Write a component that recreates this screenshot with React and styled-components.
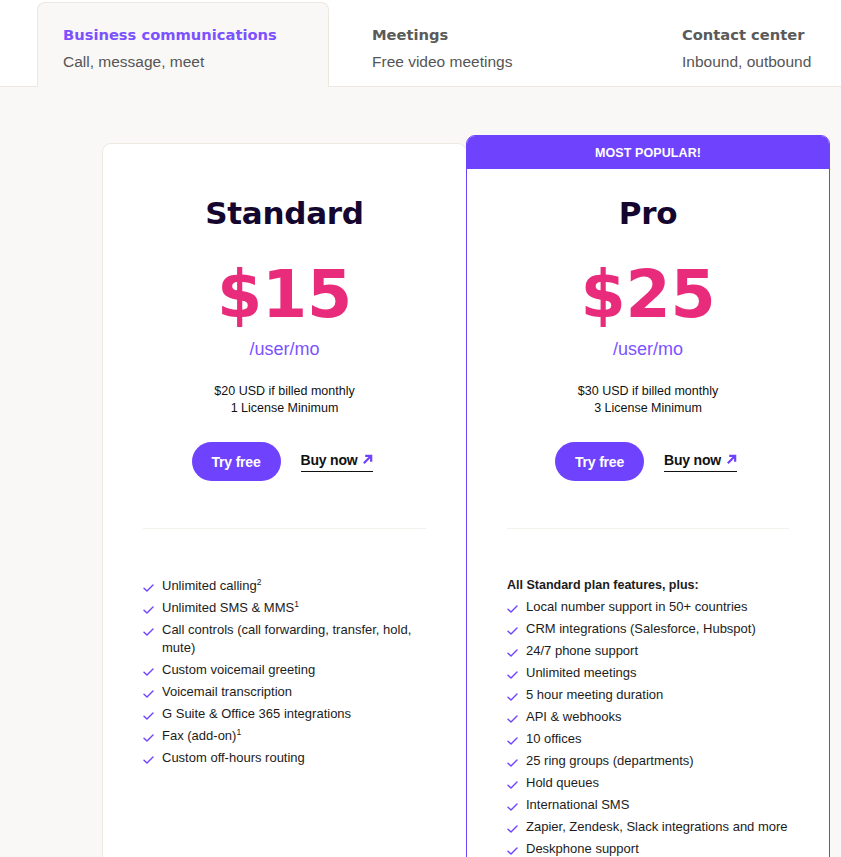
import React from "react";
import styled, { createGlobalStyle } from "styled-components";

const GlobalStyle = createGlobalStyle`
	html, body {
		margin: 0;
		padding: 0;
		background: #f9f8f6;
		font-family: "Liberation Sans", Arial, sans-serif;
		color: #1c1c1c;
	}
	* {
		box-sizing: border-box;
	}
`;

const tabs = [
	{ title: "Business communications", sub: "Call, message, meet", width: 292, active: true },
	{ title: "Meetings", sub: "Free video meetings", width: 310 },
	{ title: "Contact center", sub: "Inbound, outbound", width: 200 },
];

const plans = [
	{
		name: "Standard",
		price: "$15",
		monthly: "$20 USD if billed monthly",
		minimum: "1 License Minimum",
		features: [
			["Unlimited calling", "2"],
			["Unlimited SMS & MMS", "1"],
			["Call controls (call forwarding, transfer, hold, mute)"],
			["Custom voicemail greeting"],
			["Voicemail transcription"],
			["G Suite & Office 365 integrations"],
			["Fax (add-on)", "1"],
			["Custom off-hours routing"],
		],
	},
	{
		name: "Pro",
		price: "$25",
		monthly: "$30 USD if billed monthly",
		minimum: "3 License Minimum",
		popular: true,
		lead: "All Standard plan features, plus:",
		features: [
			["Local number support in 50+ countries"],
			["CRM integrations (Salesforce, Hubspot)"],
			["24/7 phone support"],
			["Unlimited meetings"],
			["5 hour meeting duration"],
			["API & webhooks"],
			["10 offices"],
			["25 ring groups (departments)"],
			["Hold queues"],
			["International SMS"],
			["Zapier, Zendesk, Slack integrations and more"],
			["Deskphone support"],
		],
	},
];

function Check() {
	return (
		<CheckIcon viewBox="0 0 11 8" width="11" height="8">
			<path d="M1 4.2 L4 7 L10 1" fill="none" stroke="#6f42fe" strokeWidth="1.4" strokeLinecap="round" strokeLinejoin="round" />
		</CheckIcon>
	);
}

function Arrow() {
	return (
		<svg viewBox="0 0 12 12" width="11" height="11">
			<path d="M2 10 L10 2 M3.5 2 H10 V8.5" fill="none" stroke="#6f42fe" strokeWidth="2.4" />
		</svg>
	);
}

function App() {
	return (
		<>
			<GlobalStyle />
			<TabBar>
				{tabs.map((t) => (
					<Tab key={t.title} $active={t.active} $width={t.width}>
						<TabTitle $active={t.active}>{t.title}</TabTitle>
						<TabSub>{t.sub}</TabSub>
					</Tab>
				))}
			</TabBar>
			<Main>
				<Cards>
					{plans.map((p) => (
						<Card key={p.name} $popular={p.popular}>
							{p.popular && <Banner>MOST POPULAR!</Banner>}
							<CardBody $popular={p.popular}>
								<PlanName>{p.name}</PlanName>
								<Price>{p.price}</Price>
								<Per>/user/mo</Per>
								<Billing>
									{p.monthly}
									<br />
									{p.minimum}
								</Billing>
								<Actions>
									<TryFree>Try free</TryFree>
									<BuyNow>
										Buy now <Arrow />
									</BuyNow>
								</Actions>
								<Divider />
								<Features $lead={!!p.lead}>
									{p.lead && <Lead>{p.lead}</Lead>}
									{p.features.map(([text, sup]) => (
										<Feature key={text}>
											<Check />
											<span>
												{text}
												{sup && <sup>{sup}</sup>}
											</span>
										</Feature>
									))}
								</Features>
							</CardBody>
						</Card>
					))}
				</Cards>
			</Main>
		</>
	);
}

export default App;

const TabBar = styled.div`
	display: flex;
	height: 87px;
	padding: 2px 0 0 37px;
	background: #ffffff;
	border-bottom: 1px solid #ece8df;
`;

const Tab = styled.div`
	width: ${(p) => p.$width}px;
	flex-shrink: 0;
	padding: 22px 0 0 ${(p) => (p.$active ? 25 : 42)}px;
	margin-bottom: -1px;
	border: 1px solid ${(p) => (p.$active ? "#ece8df" : "transparent")};
	border-bottom: none;
	border-radius: 8px 8px 0 0;
	background: ${(p) => (p.$active ? "#f9f8f6" : "transparent")};
`;

const TabTitle = styled.div`
	font-family: "DejaVu Sans", sans-serif;
	font-weight: bold;
	font-size: 14.7px;
	line-height: 20px;
	color: ${(p) => (p.$active ? "#7c52ff" : "#5a5a5a")};
`;

const TabSub = styled.div`
	margin-top: 7px;
	font-size: 15.5px;
	line-height: 20px;
	color: #555555;
`;

const Main = styled.div`
	background: #f9f8f6;
	padding: 48px 0 0 102px;
	overflow: hidden;
	height: 770px;
`;

const Cards = styled.div`
	display: grid;
	grid-template-columns: 364px 364px;
	align-items: start;
`;

const Card = styled.div`
	position: relative;
	margin-top: ${(p) => (p.$popular ? 0 : 8)}px;
	background: #ffffff;
	border: 1px solid ${(p) => (p.$popular ? "#6f42fe" : "#ede9e0")};
	border-radius: 9px;
	overflow: hidden;
	min-height: 760px;
	${(p) => !p.$popular && "margin-right: -1px;"}
`;

const Banner = styled.div`
	height: 33px;
	background: #6f42fe;
	color: #ffffff;
	font-weight: bold;
	font-size: 12.5px;
	line-height: 35px;
	text-align: center;
	letter-spacing: 0.1px;
`;

const CardBody = styled.div`
	padding: ${(p) => (p.$popular ? 24 : 49)}px 40px 0;
	display: flex;
	flex-direction: column;
	align-items: center;
`;

const PlanName = styled.h2`
	margin: 0;
	font-family: "DejaVu Sans", sans-serif;
	font-weight: bold;
	font-size: 31px;
	line-height: 40px;
	color: #14062e;
	letter-spacing: -0.3px;
`;

const Price = styled.div`
	margin-top: 26px;
	font-family: "DejaVu Sans", sans-serif;
	font-weight: bold;
	font-size: 65px;
	line-height: 72px;
	color: #e82c7b;
	letter-spacing: -0.3px;
`;

const Per = styled.div`
	margin-top: 6px;
	font-size: 18px;
	line-height: 24px;
	color: #7c52ff;
`;

const Billing = styled.div`
	margin-top: 22px;
	font-size: 12.5px;
	line-height: 17px;
	text-align: center;
	color: #111111;
`;

const Actions = styled.div`
	margin-top: 25px;
	display: flex;
	align-items: center;
	gap: 20px;
	margin-left: -4px;
`;

const TryFree = styled.a`
	width: 89px;
	height: 39px;
	border-radius: 20px;
	background: #6f42fe;
	color: #ffffff;
	font-weight: bold;
	font-size: 14px;
	display: flex;
	align-items: center;
	justify-content: center;
	cursor: pointer;
	letter-spacing: -0.2px;
`;

const BuyNow = styled.a`
	display: flex;
	align-items: center;
	gap: 5px;
	padding-bottom: 3px;
	border-bottom: 1.5px solid #111111;
	font-weight: bold;
	font-size: 14px;
	color: #111111;
	cursor: pointer;
	letter-spacing: -0.2px;
`;

const Divider = styled.div`
	align-self: stretch;
	margin-top: 47px;
	height: 1px;
	background: #f3f1ec;
`;

const Features = styled.ul`
	align-self: stretch;
	margin: ${(p) => (p.$lead ? 47 : 48)}px 0 0;
	padding: 0;
	list-style: none;
	display: flex;
	flex-direction: column;
	gap: 4px;
`;

const Lead = styled.li`
	font-weight: bold;
	font-size: 12.5px;
	line-height: 18px;
`;

const Feature = styled.li`
	display: flex;
	align-items: flex-start;
	gap: 8px;
	font-size: 13px;
	line-height: 18px;
	color: #1c1c1c;

	sup {
		font-size: 8.5px;
		line-height: 0;
		vertical-align: 5px;
	}
`;

const CheckIcon = styled.svg`
	flex-shrink: 0;
	margin-top: 7px;
`;
